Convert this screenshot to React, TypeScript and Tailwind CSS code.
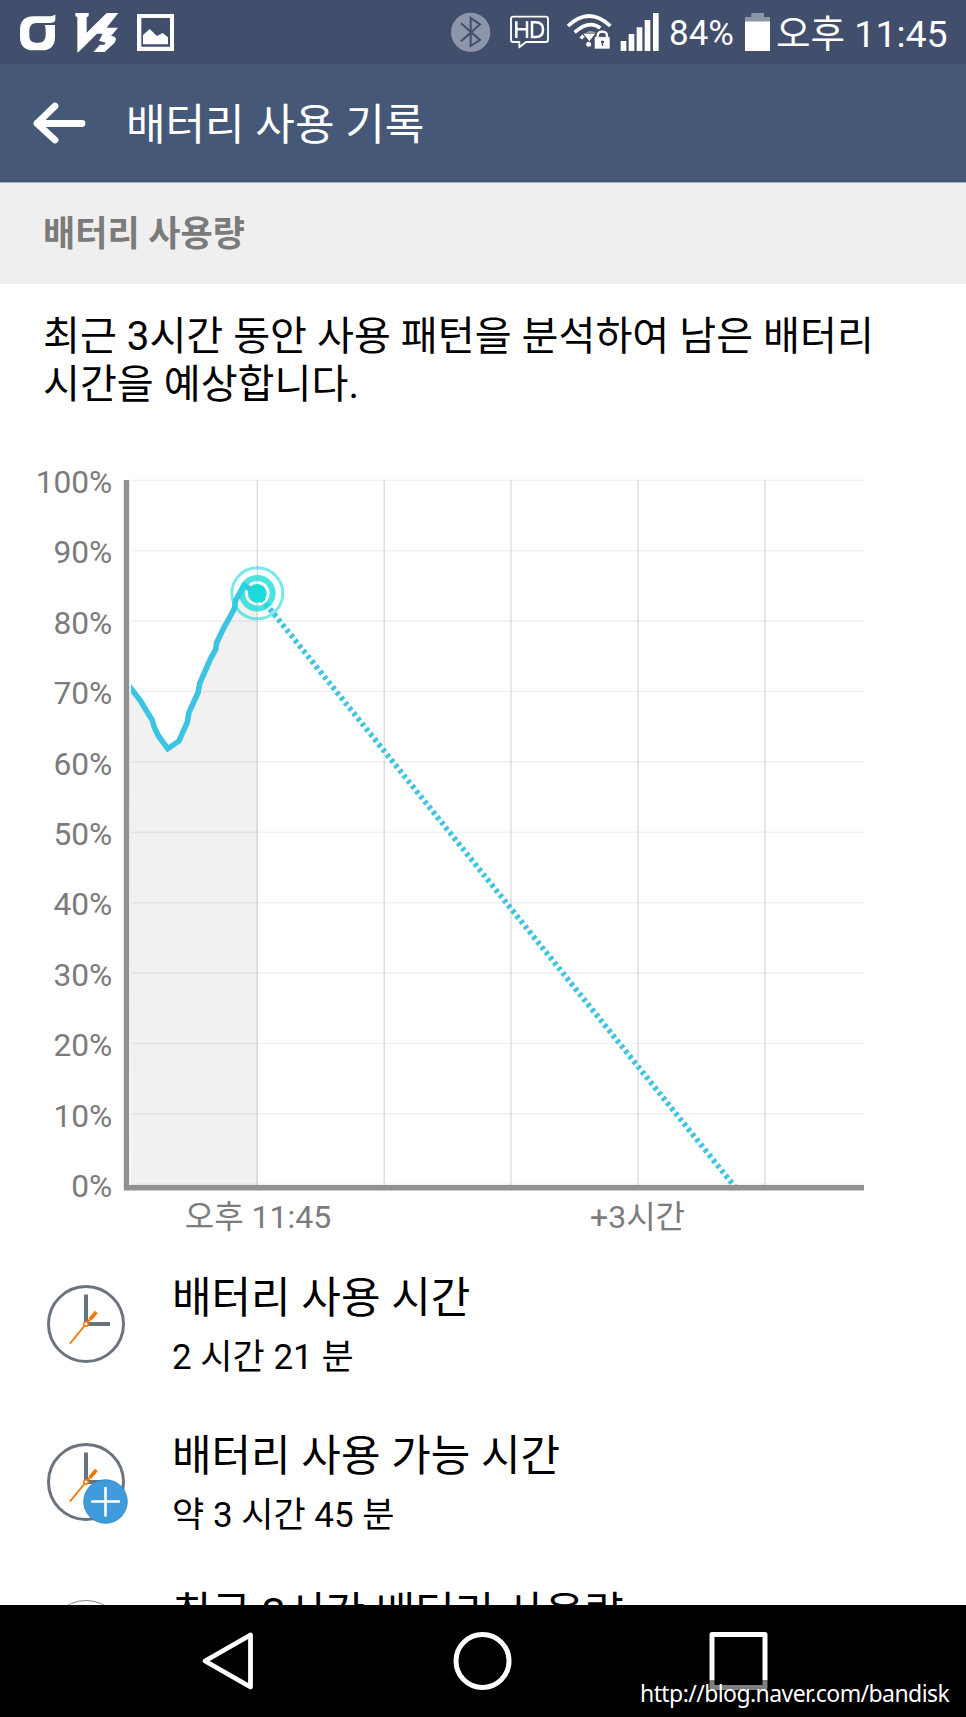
import React from 'react';

interface HistoryItem {
  id: number;
  title: string;
  value: string;
  icon: 'clock' | 'clock-plus' | 'circle';
}

const items: HistoryItem[] = [
  { id: 1, title: '배터리 사용 시간', value: '2 시간 21 분', icon: 'clock' },
  { id: 2, title: '배터리 사용 가능 시간', value: '약 3 시간 45 분', icon: 'clock-plus' },
  { id: 3, title: '최근 3시간 배터리 사용량', value: '', icon: 'circle' },
];

const percents = [100, 90, 80, 70, 60, 50, 40, 30, 20, 10, 0];
const hourLines = [257.3, 384.3, 511, 638, 765];

// battery level samples, in chart coordinates
const levels = [
  [129, 226], [131.3, 229], [140, 240], [152.3, 260.3], [154.3, 267.3], [158.3, 275.7], [167.7, 288.7],
  [179, 281], [187.3, 262.3], [189, 252.3], [198, 232.7], [199.7, 223.3], [210.7, 198.3],
  [215.7, 189.3], [216.7, 182.7], [224, 167.3], [228.3, 160], [234.7, 147.7], [235.3, 141],
  [244, 125.3], [257.3, 133.3],
];
const levelPoints = levels.map(p => p.join(',')).join(' ');

const StatusBar: React.FC = () => (
  <div className="flex h-16 shrink-0 items-center justify-between bg-[#414e6c] text-white">
    <svg width="180" height="64" viewBox="0 0 540 192" fill="#fff">
      <path d="M166 43 Q160 49 145 49 H100 Q60 50 60 90 V110 Q60 151 101 151 H125 Q165 151 165 110 V75 H134 Q137 80 137 92 V105 Q137 128 116 128 H108 Q88 128 88 107 V93 Q88 69 110 69 H148 Q165 69 166 60 Z" />
      <path d="M226 39 H266 V48 L260 52 V98 L320 39 H355 L320 83 H354 L333 108 Q348 109 348 118 L344 128 L314 156 H280 L300 134 H313 L317 128 L297 122 L308 101 L291 101 L235 157 H232 V52 L226 48 Z" />
      <path fillRule="evenodd" d="M411 42 H522 V153 H411 Z M424 54 V140 H510 V54 Z" />
      <path d="M429 133 V105 L449 87 L471 108 L488 99 L504 112 V133 Z" />
    </svg>
    <div className="flex h-16 items-center">
      <svg width="220" height="64" viewBox="50 0 660 192">
        <circle cx="121" cy="97" r="59" fill="#8d95a8" />
        <path d="M92 70 L149 120 L121 138 V54 L149 73 L92 124" fill="none" stroke="#414e6c" strokeWidth="6" />
        <path d="M249 50 H346 Q353 50 353 57 V119 Q353 126 346 126 H287 L267 142 V126 H249 Q242 126 242 119 V57 Q242 50 249 50 Z" fill="none" stroke="#fff" strokeWidth="5.5" strokeLinejoin="round" />
        <g fill="none" stroke="#fff" strokeWidth="7.5">
          <path d="M258 64 V114 M290 64 V114 M258 88 H290" />
          <path d="M305 67 H316 Q338 67 338 89 Q338 111 316 111 H305 Z" />
        </g>
        <g fill="none" stroke="#fff">
          <path d="M413 78 Q476 18 540 78" strokeWidth="11" />
          <path d="M433 97 Q476 58 510 84" strokeWidth="11" />
          <path d="M451 115 Q474 92 494 103" strokeWidth="10" />
        </g>
        <path d="M456 99 H498 L477 126 Z" fill="#fff" stroke="#333" strokeWidth="3" />
        <circle cx="475" cy="133" r="7.5" fill="#fff" />
        <rect x="492" y="110" width="47" height="37" rx="3" fill="#fff" stroke="#414e6c" strokeWidth="2" />
        <path d="M502 113 V108 Q502 95 516 95 Q530 95 530 108 V113" fill="none" stroke="#fff" strokeWidth="7" />
        <path d="M512 122 H521 V129 H518.500 V137 H514.500 V129 H512 Z" fill="#414e6c" />
        <path d="M571 123 H588 V153 H571 Z M595 102 H612 V153 H595 Z M619 82 H636 V153 H619 Z M643 60 H660 V153 H643 Z M668 39 H685 V153 H668 Z" fill="#fff" />
      </svg>
      <span className="ml-[2.3px] w-[76px] pt-[4px] text-[35px] leading-[60px] whitespace-nowrap">84%</span>
      <svg width="25" height="64" viewBox="0 0 75 192">
        <path d="M0 51 H19 V39 H57 V51 H75 V64 H0 Z" fill="#8d95a8" />
        <path d="M0 64 H75 V153 H0 Z" fill="#fff" />
      </svg>
      <span className="ml-[6px] w-[190px] pt-[4px] text-[37.5px] leading-[60px] whitespace-nowrap">오후 11:45</span>
    </div>
  </div>
);

const BatteryChart: React.FC = () => (
  <svg className="block shrink-0" width="966" height="785" viewBox="0 0 966 785">
    <polygon points={`131,725 ${levelPoints} 257.3,725`} fill="#f1f1f1" />
    {percents.map((percent, i) => (
      <g key={percent}>
        <line x1="131" x2="864" y1={20.3 + i * 70.4} y2={20.3 + i * 70.4} stroke="#000" strokeOpacity="0.05" strokeWidth="1.6" />
        <text x="112.300" y={33 + i * 70.4} fontSize="31.700" fill="#7b7b7b" textAnchor="end">{percent}%</text>
      </g>
    ))}
    {hourLines.map(x => (
      <line key={x} x1={x} x2={x} y1="20" y2="725" stroke="#000" strokeOpacity="0.13" strokeWidth="1.500" />
    ))}
    <clipPath id="plot">
      <rect x="131" y="20" width="733" height="705" />
    </clipPath>
    <g clipPath="url(#plot)" fill="none" stroke="#3dc4e3">
      <polyline points={levelPoints} strokeWidth="5.6" />
      <line x1="257.3" y1="133.3" x2="735" y2="727" strokeWidth="5.6" strokeDasharray="3.4 3.27" />
    </g>
    <g fill="none" stroke="#1edbdb">
      <circle cx="257.3" cy="133.3" r="25.500" strokeWidth="3" strokeOpacity="0.6" />
      <circle cx="257.3" cy="133.3" r="15.300" strokeWidth="6" strokeOpacity="0.8" />
      <circle cx="257.3" cy="133.3" r="9.400" fill="#1edbdb" stroke="none" />
    </g>
    <path d="M126.500 20 V727.700 H864" fill="none" stroke="#919191" strokeWidth="5.4" />
    <g fontSize="32" fill="#7b7b7b" textAnchor="middle">
      <text x="258" y="768">오후 11:45</text>
      <text x="637.500" y="768">+3시간</text>
    </g>
  </svg>
);

const ItemIcon: React.FC<{ icon: HistoryItem['icon'] }> = ({ icon }) => {
  if (icon === 'circle') {
    return (
      <svg width="84" height="84" viewBox="0 0 84 84">
        <circle cx="40" cy="42" r="38.500" fill="#fff" stroke="#85898f" strokeWidth="1" />
      </svg>
    );
  }

  return (
    <svg width="84" height="84" viewBox="0 0 84 84">
      <circle cx="40" cy="42" r="37.500" fill="#fff" stroke="#6b737e" strokeWidth="3" />
      <path d="M40 12.500 V42 H64" fill="none" stroke="#69737f" strokeWidth="4" />
      <path d="M24 61.500 L40 42" stroke="#f57600" strokeWidth="1.9" />
      <path d="M40 42 L44 37.500" stroke="#f57600" strokeWidth="2" />
      <path d="M44 37.500 L50.300 30" stroke="#f57600" strokeWidth="3.600" />
      <circle cx="40" cy="42" r="2.200" fill="#fff" stroke="#f57600" strokeWidth="1.500" />
      {icon === 'clock-plus' && (
        <g>
          <circle cx="59.500" cy="61.500" r="21.800" fill="#3f9bdc" stroke="#2f81bd" strokeWidth="0.800" />
          <path d="M45 61.500 H74 M59.500 47 V76.500" stroke="#fff" strokeWidth="2.600" />
        </g>
      )}
    </svg>
  );
};

const HistoryRow: React.FC<{ item: HistoryItem }> = ({ item }) => (
  <div className="flex h-[157.5px] shrink-0 items-start pl-[46px] text-black">
    <div className="w-[126px] pt-[37px]">
      <ItemIcon icon={item.icon} />
    </div>
    <div className="pt-[23px] whitespace-nowrap">
      <div className="h-[60px] text-[43px] leading-[60px]">{item.title}</div>
      <div className="h-[60px] text-[35px] leading-[60px]">{item.value}</div>
    </div>
  </div>
);

const NavigationBar: React.FC = () => (
  <div className="relative h-28 shrink-0 bg-black">
    <div className="flex h-full items-center justify-between pr-[197px] pb-[1px] pl-[201px]">
      <svg width="54" height="60" viewBox="0 0 54 60">
        <path d="M49.500 4 V56 L4 30 Z" fill="none" stroke="#fff" strokeWidth="4.800" strokeLinejoin="round" />
      </svg>
      <svg width="60" height="60" viewBox="0 0 60 60">
        <circle cx="30.500" cy="30" r="26.500" fill="none" stroke="#fff" strokeWidth="5" />
      </svg>
      <svg width="60" height="60" viewBox="0 0 60 60">
        <rect x="3" y="3.500" width="53" height="53" fill="none" stroke="#fff" strokeWidth="5" strokeLinejoin="round" />
      </svg>
    </div>
    <div className="absolute right-0 bottom-0 h-[37px] w-[334px] bg-black/50 pl-[8px] font-['Noto_Sans','Open_Sans',sans-serif] text-[23px] leading-[27px] tracking-[-0.58px] whitespace-nowrap text-white">
      http://blog.naver.com/bandisk
    </div>
  </div>
);

const App: React.FC = () => {
  return (
    <div className="flex h-[1717px] w-[966px] flex-col overflow-hidden bg-white font-['Roboto','Noto_Sans_CJK_KR',sans-serif]">
      <StatusBar />

      {/* Header */}
      <header className="flex h-[119px] shrink-0 items-center border-b border-[#a3adbf] bg-[#465877] pl-[33px] text-white">
        <svg width="93" height="44" viewBox="0 0 93 44">
          <path d="M22 5 L4 22.500 L22 39 M4 22.500 H49" fill="none" stroke="#fff" strokeWidth="6.800" strokeLinecap="round" strokeLinejoin="round" />
        </svg>
        <h1 className="pt-[4px] text-[43px] leading-[60px]">배터리 사용 기록</h1>
      </header>

      <main className="flex min-h-0 flex-1 flex-col overflow-hidden">
        <h2 className="h-[101px] shrink-0 bg-[#efefef] pt-[2px] pl-[43px] text-[35px] leading-[99px] font-bold text-[#7b7b7b]">
          배터리 사용량
        </h2>
        <p className="h-[176px] shrink-0 pt-[29px] pl-[43px] text-[40.15px] leading-[47.5px] text-black">
          최근 3시간 동안 사용 패턴을 분석하여 남은 배터리
          <br />
          시간을 예상합니다.
        </p>
        <BatteryChart />
        {items.map(item => (
          <HistoryRow key={item.id} item={item} />
        ))}
      </main>

      <NavigationBar />
    </div>
  );
};

export default App;
